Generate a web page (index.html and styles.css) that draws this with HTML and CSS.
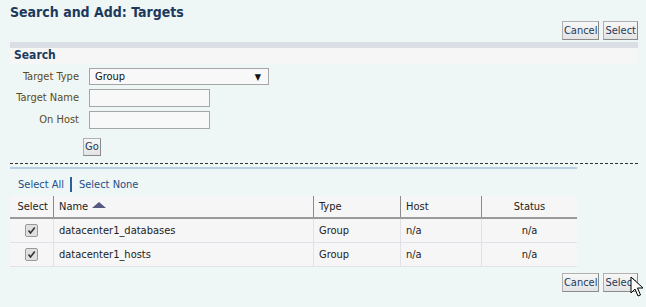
FILE: index.html
```html
<!DOCTYPE html>
<html>
<head>
<meta charset="utf-8">
<link rel="stylesheet" href="styles.css">
</head>
<body>
<div class="page">
  <h1 class="title">Search and Add: Targets</h1>
  <div class="actions top"><button class="btn">Cancel</button><button class="btn">Select</button></div>
  <div class="box">
    <div class="box-head">Search</div>
    <div class="form">
      <label>Target Type</label>
      <div class="select"><span>Group</span><span class="arrow">▼</span></div>
      <label>Target Name</label>
      <div class="input"></div>
      <label>On Host</label>
      <div class="input"></div>
      <span></span>
      <div><button class="btn go">Go</button></div>
    </div>
  </div>
  <div class="dashed"></div>
  <div class="results">
    <div class="solid"></div>
    <div class="links"><a>Select All</a><span class="sep"></span><a>Select None</a></div>
    <table class="grid">
      <thead>
        <tr><th class="c-sel">Select</th><th class="c-name">Name <span class="sort"></span></th><th class="c-type">Type</th><th class="c-host">Host</th><th class="c-status">Status</th></tr>
      </thead>
      <tbody>
        <tr><td class="c-sel"><span class="cb"><svg width="9" height="9" viewBox="0 0 9 9"><path d="M1.5 4.5 L3.5 7 L7.8 1.5" fill="none" stroke="#333" stroke-width="1.6"/></svg></span></td><td>datacenter1_databases</td><td>Group</td><td>n/a</td><td class="c-status">n/a</td></tr>
        <tr><td class="c-sel"><span class="cb"><svg width="9" height="9" viewBox="0 0 9 9"><path d="M1.5 4.5 L3.5 7 L7.8 1.5" fill="none" stroke="#333" stroke-width="1.6"/></svg></span></td><td>datacenter1_hosts</td><td>Group</td><td>n/a</td><td class="c-status">n/a</td></tr>
      </tbody>
    </table>
  </div>
  <div class="actions bottom"><button class="btn">Cancel</button><button class="btn">Select</button></div>
  <svg class="cursor" width="14" height="22" viewBox="0 0 14 22"><path d="M1 1 L1 17 L5 13 L8 20 L10.5 19 L7.5 12 L13 12 Z" fill="#fff" stroke="#000" stroke-width="1"/></svg>
</div>
</body>
</html>
```
FILE: styles.css
```css
html, body { margin: 0; padding: 0; }
body { background: #eff6f6; font-family: "DejaVu Sans Condensed", "Liberation Sans", sans-serif; font-size: 11px; color: #333; width: 646px; height: 307px; overflow: hidden; }
.page { position: relative; padding: 0 8px 0 10px; }
.title { margin: 0; padding-top: 4px; height: 17px; font-size: 14px; font-weight: bold; color: #1d3a5c; line-height: 17px; }
.actions { display: flex; justify-content: flex-end; gap: 4px; }
.actions.top { height: 20px; }
.btn { font-family: "DejaVu Sans Condensed", "Liberation Sans", sans-serif; font-size: 11px; color: #1d3a5c; background: linear-gradient(#f7f7f7, #e4e4e4); border: 1px solid #b0b0b0; border-bottom-color: #8a8a8a; border-right-color: #8a8a8a; padding: 0 1px; height: 19px; line-height: 16px; margin: 0; border-radius: 0; }
.box { margin-top: 1px; }
.box-head { border-top: 6px solid #dcdee6; background: #f6f6f6; height: 16px; line-height: 15px; padding-left: 4px; font-weight: bold; font-size: 12px; color: #1d3a5c; }
.form { display: grid; grid-template-columns: 69px auto; column-gap: 10px; row-gap: 4px; padding-top: 4px; align-items: center; }
.form label { text-align: right; color: #5a4a1a; font-size: 11px; line-height: 14px; }
.form .select { height: 15px; border: 1px solid #a6a6a6; background: #f8f8f8; display: flex; justify-content: space-between; align-items: center; padding: 0 7px 0 5px; width: 166px; color: #111; font-size: 11px; }
.arrow { font-size: 9px; color: #111; }
.form .input { width: 119px; height: 16px; border: 1px solid #a6a6a6; background: #f8f8f8; }
.btn.go { margin-top: 5px; margin-left: -6px; padding: 0 1px; height: 18px; }
.dashed { border-top: 1px dashed #333; margin-top: 7px; }
.results { width: 567px; }
.solid { border-top: 2px solid #b7cde0; margin-top: 3px; height: 0; }
.links { height: 27px; display: flex; align-items: center; padding-left: 8px; padding-top: 4px; box-sizing: border-box; color: #1d4f86; font-size: 11px; }
.links .sep { display: inline-block; width: 2px; height: 15px; background: #2d5f9a; margin: 0 7px 0 6px; }
.grid { border-collapse: collapse; width: 567px; font-size: 11px; color: #222; background: #f6f6f6; }
.grid th { font-weight: normal; text-align: left; height: 21px; padding: 0 5px; border-left: 1px solid #8a8a8a; border-bottom: 2px solid #9a9a9a; background: #f6f6f6; }
.grid th:first-child { border-left: none; text-align: right; }
.grid td { height: 23px; padding: 0 5px; border: 1px solid #e1e1ea; }
.grid td:first-child { border-left: none; }
.grid td:last-child { border-right: none; }
.c-sel { width: 33px; text-align: center; }
.c-name { width: 249px; }
.c-type { width: 76px; }
.c-host { width: 70px; }
.grid th.c-status, .grid td.c-status { text-align: center; }
.sort { display: inline-block; width: 0; height: 0; border-left: 7px solid transparent; border-right: 7px solid transparent; border-bottom: 6px solid #555a80; margin-left: 1px; vertical-align: 2px; }
.cb { display: inline-block; width: 11px; height: 11px; border: 1px solid #999; background: #e0e0e0; border-radius: 2px; position: relative; vertical-align: middle; }
.cb svg { position: absolute; left: 1px; top: 1px; }
.actions.bottom { margin-top: 6px; }
.cursor { position: absolute; left: 630px; top: 276px; }
```
